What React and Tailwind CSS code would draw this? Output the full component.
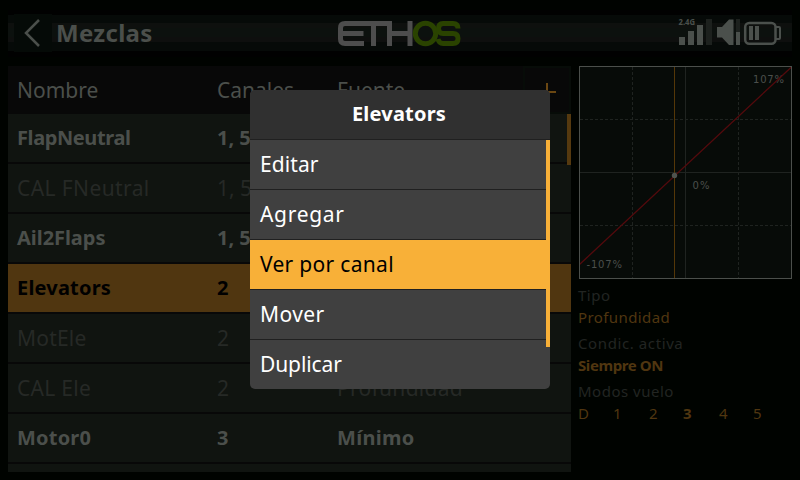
import React from "react";

const rows = [
  { name: "FlapNeutral", nt: "tracking-[-0.4px]", ch: "1, 5", source: "Alerones", on: true },
  { name: "CAL FNeutral", nt: "tracking-[0.4px]", ch: "1, 5", source: "Alerones", on: false },
  { name: "Ail2Flaps", nt: "tracking-[-0.05px]", ch: "1, 5", source: "Alerones", on: true },
  { name: "Elevators", nt: "tracking-[0.2px]", ch: "2", source: "", on: true, selected: true },
  { name: "MotEle", nt: "tracking-[0.2px]", ch: "2", source: "", on: false },
  { name: "CAL Ele", nt: "tracking-[0.3px]", ch: "2", source: "Profundidad", on: false },
  { name: "Motor0", nt: "tracking-[0.2px]", ch: "3", source: "Mínimo", on: true },
];

const menu = [
  { label: "Editar", t: "tracking-[0.1px]" },
  { label: "Agregar", t: "tracking-[0.7px]" },
  { label: "Ver por canal", t: "tracking-[0.3px]", active: true },
  { label: "Mover", t: "tracking-[0.4px]" },
  { label: "Duplicar", t: "tracking-[-0.1px]" },
];

function rowStyle(r) {
  if (r.selected) return "bg-[#503610] text-black font-bold";
  return r.on ? "bg-[#101410] text-[#4b4f4b] font-bold" : "bg-[#101410] text-[#262926] text-[21px]";
}

function Logo() {
  return (
    <svg width="126" height="28" viewBox="0 0 126 28" fill="none" strokeWidth="5">
      <g stroke="#4d4d4d">
        <path d="M27 4.500H8Q3.500 4.500 3.500 9V20Q3.500 24.500 8 24.500H27M3.500 14.500H26.500" />
        <path d="M24 4.500H50M36.500 4.500V27" />
        <path d="M52.500 2V27M73 2V27M52.500 14.500H73" />
      </g>
      <g stroke="#2a4300">
        <circle cx="88.500" cy="14.500" r="10.200" />
        <path d="M121 9.500Q121 4.500 116 4.500H106Q101.500 4.500 101.500 9.500T106 14.500H116Q121 14.500 121 19.500T116 24.500H106Q102 24.500 101 20" />
      </g>
    </svg>
  );
}

function StatusIcons() {
  return (
    <svg className="block" width="106" height="32" viewBox="677 18 106 32" fill="#4b504c">
      <text x="678.500" y="26.300" fontFamily="Noto Sans" fontSize="8" fontWeight="700" textLength="16.500" lengthAdjust="spacingAndGlyphs">2.4G</text>
      <path d="M679 38h6v8h-6zM688 32h6v14h-6zM697 26h6v20h-6z" />
      <path d="M706 20h6v26h-6z" fill="#1d211e" />
      <path d="M717 28h5l7-7.500h4.500V46H729l-7-7.500h-5z" />
      <path d="M736 20h4v13h-4z" fill="#1d211e" />
      <path d="M736 33h4v13h-4z" />
      <rect x="745.200" y="24" width="30.300" height="20.700" rx="4" fill="none" stroke="#4b504c" strokeWidth="2.500" />
      <path d="M776 28h3q1 0 1 1v10q0 1-1 1h-3" fill="none" stroke="#4b504c" strokeWidth="2" />
      <path d="M749 27h4v14h-4zM755 27h4v14h-4z" />
    </svg>
  );
}

function Curve() {
  return (
    <svg className="block" width="213" height="213" viewBox="0 0 213 213" fontFamily="DejaVu Sans" fontSize="10">
      <rect x="0.500" y="0.500" width="212" height="212" fill="#070b08" />
      <path d="M106.500 1V212M1 106.500H212" stroke="#1f2320" />
      <path d="M53.500 1V212M159.500 1V212M1 53.500H212M1 159.500H212" stroke="#1f2320" strokeDasharray="3 2" />
      <text x="174" y="16.500" fill="#4b4f4b" textLength="31">107%</text>
      <text x="113.500" y="122.500" fill="#4b4f4b" textLength="17">0%</text>
      <text x="7.500" y="201.500" fill="#4b4f4b" textLength="35.500">-107%</text>
      <path d="M0.500 198.500L212.500 1" stroke="#540a0d" strokeWidth="1.300" fill="none" />
      <rect x="0.500" y="0.500" width="212" height="212" fill="none" stroke="#4b4f4b" />
      <path d="M95.500 1V212" stroke="#543708" />
      <circle cx="95.500" cy="109.500" r="2.700" fill="#4f534f" />
    </svg>
  );
}

export default function App() {
  return (
    <div className="relative flex h-[480px] w-[800px] flex-col overflow-hidden bg-[#000300] px-2 font-['Noto_Sans',sans-serif] text-[20px]">
      <header className="grid h-[66px] grid-cols-[1fr_126px_1fr] items-center bg-[linear-gradient(#000300_0_10px,#010101_10px_15px,#060a08_15px_23px,#0e100e_23px_28px,#0c110e_28px_37px,#0e0f0e_37px_42px,#060a08_42px_51px,#010101_51px_57px,#000300_57px)]">
        <div className="flex items-center pl-[6px]">
          <div className="flex h-[38px] w-[38px] items-center justify-center bg-[#050a07]">
            <svg width="38" height="38" viewBox="0 0 38 38" fill="none" stroke="#4b4f4b" strokeWidth="2.500">
              <path d="M25 6L12 19L25 32" />
            </svg>
          </div>
          <span className="pl-1 text-[24px] font-bold tracking-[0.3px] text-[#4b4f4b]">Mezclas</span>
        </div>
        <Logo />
        <div className="flex justify-end pr-[9px]">
          <StatusIcons />
        </div>
      </header>

      <div className="flex gap-2">
        <div className="relative h-[406px] w-[563px] overflow-hidden bg-[#080808]">
          <div className="grid h-12 grid-cols-[200px_120px_1fr_48px] items-center pl-[9px] text-[21px] leading-[48px] text-[#4b4f4b]">
            <span className="tracking-[0px]">Nombre</span>
            <span className="tracking-[0px]">Canales</span>
            <span className="tracking-[0px]">Fuente</span>
            <span className="flex h-12 items-center justify-center border-2 border-[#070c08] bg-[#080808]">
              <svg width="18" height="18" viewBox="0 0 18 18" className="mt-[4px]" stroke="#6b4712" strokeWidth="2">
                <path d="M9 0V18M0 9H18" />
              </svg>
            </span>
          </div>
          <div className="flex flex-col gap-[2px]">
            {rows.map((r) => (
              <div key={r.name} className={"grid h-12 grid-cols-[200px_120px_1fr] pl-[9px] leading-[48px] " + rowStyle(r)}>
                <span className={r.nt}>{r.name}</span>
                <span>{r.ch}</span>
                <span className="tracking-[0.3px]">{r.source}</span>
              </div>
            ))}
            <div className="h-12 bg-[#101410]" />
          </div>
          <div className="absolute right-0 top-12 h-[51px] w-1 bg-[#55390f]" />
        </div>

        <aside className="w-[213px] text-[15px] text-[#222522]">
          <Curve />
          <div className="-ml-px flex flex-col pt-[5px]">
            <span className="h-[22px] leading-[22px] tracking-[0.5px]">Tipo</span>
            <span className="h-[26px] leading-[22px] tracking-[0.4px] text-[#503610]">Profundidad</span>
            <span className="h-[22px] leading-[22px] tracking-[0.6px]">Condic. activa</span>
            <span className="h-[26px] leading-[22px] font-bold tracking-[-0.4px] text-[#503610]">Siempre ON</span>
            <span className="h-[22px] leading-[22px] tracking-[0.5px]">Modos vuelo</span>
            <div className="grid grid-cols-[35px_36px_34px_36px_34px_20px] leading-[22px] text-[#503610]">
              <span>D</span>
              <span>1</span>
              <span>2</span>
              <span className="font-bold">3</span>
              <span>4</span>
              <span>5</span>
            </div>
          </div>
        </aside>
      </div>

      <div className="absolute left-[250px] top-[90px] h-[299px] w-[300px] overflow-hidden rounded-[5px] bg-[#404040] text-white">
        <div className="h-[50px] border-b border-[#202020] bg-[#303030] pr-[2px] text-center font-bold leading-[48px] tracking-[0.2px]">Elevators</div>
        {menu.map((m) => (
          <div
            key={m.label}
            className={
              "h-[50px] border-b border-[#202020] pl-[10px] text-[21px] leading-[48px] " +
              m.t +
              (m.active ? " bg-[#f8b038] text-black" : "")
            }
          >
            {m.label}
          </div>
        ))}
        <span className="absolute right-0 top-[50px] h-[207px] w-1 bg-[#f8b038]" />
      </div>
    </div>
  );
}
